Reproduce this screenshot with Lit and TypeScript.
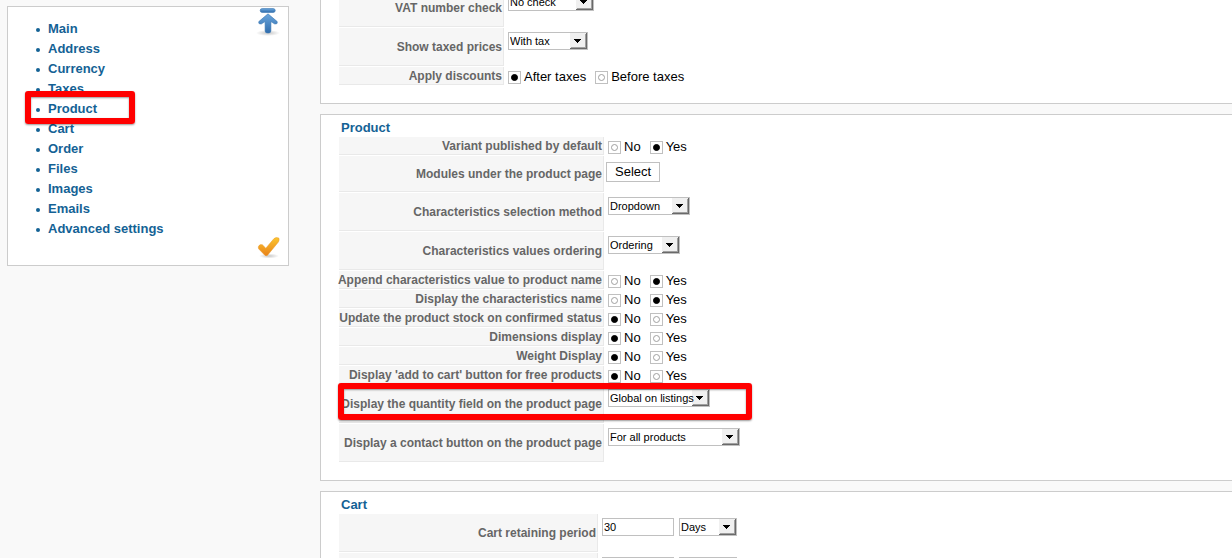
import { LitElement, html, css, nothing, TemplateResult } from "lit";
import { customElement, property } from "lit/decorators.js";
import { classMap } from "lit/directives/class-map.js";

type Field =
  | { kind: "select"; id: string; options: string[]; size: string }
  | { kind: "radio"; id: string; options: string[]; value: string }
  | { kind: "button"; id: string; text: string }
  | { kind: "period"; id: string; amount: string; unit: string };

interface Setting {
  label: string;
  field: Field;
  marked?: boolean;
}

const yesNo = (id: string, value: string): Field => ({ kind: "radio", id, options: ["No", "Yes"], value });

const TAXES: Setting[] = [
  { label: "VAT number check", field: { kind: "select", id: "vat-check", options: ["No check"], size: "w86" } },
  { label: "Show taxed prices", field: { kind: "select", id: "taxed-prices", options: ["With tax"], size: "w80" } },
  {
    label: "Apply discounts",
    field: { kind: "radio", id: "discounts", options: ["After taxes", "Before taxes"], value: "After taxes" },
  },
];

const PRODUCT: Setting[] = [
  { label: "Variant published by default", field: yesNo("variant", "Yes") },
  { label: "Modules under the product page", field: { kind: "button", id: "modules", text: "Select" } },
  { label: "Characteristics selection method", field: { kind: "select", id: "char-method", options: ["Dropdown"], size: "w82" } },
  { label: "Characteristics values ordering", field: { kind: "select", id: "char-order", options: ["Ordering"], size: "w72" } },
  { label: "Append characteristics value to product name", field: yesNo("append", "Yes") },
  { label: "Display the characteristics name", field: yesNo("char-name", "Yes") },
  { label: "Update the product stock on confirmed status", field: yesNo("stock", "No") },
  { label: "Dimensions display", field: yesNo("dimensions", "No") },
  { label: "Weight Display", field: yesNo("weight", "No") },
  { label: "Display 'add to cart' button for free products", field: yesNo("free", "No") },
  {
    label: "Display the quantity field on the product page",
    field: { kind: "select", id: "quantity", options: ["Global on listings"], size: "w102" },
    marked: true,
  },
  {
    label: "Display a contact button on the product page",
    field: { kind: "select", id: "contact", options: ["For all products"], size: "w132" },
  },
];

const CART: Setting[] = [
  { label: "Cart retaining period", field: { kind: "period", id: "retain", amount: "30", unit: "Days" } },
  { label: "", field: { kind: "period", id: "next-period", amount: "", unit: "" } },
];

@customElement("settings-panel")
export class SettingsPanel extends LitElement {
  @property() heading = "";
  @property({ attribute: false }) settings: Setting[] = [];

  static styles = css`
    :host {
      display: block;
      box-sizing: border-box;
      background: #fff;
      border: 1px solid #ccc;
      border-right: 0;
      padding: 0 18px 18px;
      --key: 265px;
    }
    :host([narrow]) { --key: 165px; }
    :host([medium]) { --key: 259px; }
    .heading {
      margin: 0;
      padding: 4px 2px 0;
      font-size: 13px;
      line-height: 18px;
      font-weight: bold;
      color: #146295;
    }
    .rows { display: grid; gap: 1px; }
    .row {
      position: relative;
      display: grid;
      grid-template-columns: var(--key) 1fr;
      min-height: 38px;
    }
    .row.radio { min-height: 18px; }
    .row.button { min-height: 36px; }
    .key {
      display: flex;
      align-items: center;
      justify-content: flex-end;
      padding-right: 1px;
      background: #f6f6f6;
      border: solid #e9e9e9;
      border-width: 0 1px 1px 0;
      color: #666;
      font-size: 12px;
      line-height: 16px;
      font-weight: bold;
      white-space: nowrap;
    }
    .value {
      display: flex;
      align-items: flex-start;
      padding: 4px 4px 0;
      gap: 5px;
    }
    .radio .value { padding-top: 2px; gap: 9px; }
    .button .value { padding: 6px 2px 0; }
    select, input, button {
      box-sizing: border-box;
      margin: 0;
      border: 1px solid #c0c0c0;
      border-radius: 0;
      background-color: #fff;
      color: #000;
      font-family: inherit;
    }
    select, .text {
      height: 18px;
      font-size: 11px;
      line-height: 16px;
      padding: 0 1px;
    }
    select {
      appearance: none;
      background-repeat: no-repeat;
      background-position: right center;
      background-image: url("data:image/svg+xml,%3Csvg xmlns='http://www.w3.org/2000/svg' width='17' height='16' shape-rendering='crispEdges'%3E%3Cpath fill='%23f0f0f0' d='M0 0h17v16H0z'/%3E%3Cpath fill='%23696969' d='M16 0h1v16H0v-1h16z'/%3E%3Cpath fill='%23a0a0a0' d='M15 1h1v14H1v-1h14z'/%3E%3Cpath d='M4 6h7v1H4zM5 7h5v1H5zM6 8h3v1H6zM7 9h1v1H7z'/%3E%3C/svg%3E");
    }
    .w58 { width: 58px; }
    .w72 { width: 72px; }
    .w80 { width: 80px; }
    .w82 { width: 82px; }
    .w86 { width: 86px; }
    .w102 { width: 102px; }
    .w132 { width: 132px; }
    button {
      height: 20px;
      padding: 0 8px;
      font-size: 13px;
      line-height: 18px;
    }
    .choice {
      display: flex;
      align-items: flex-start;
      gap: 3px;
      font-size: 13px;
      line-height: 16px;
      color: #000;
      white-space: nowrap;
    }
    .dot {
      appearance: none;
      width: 13px;
      height: 13px;
      margin-top: 2px;
      display: grid;
      place-items: center;
    }
    .dot::before {
      content: "";
      box-sizing: border-box;
      width: 7px;
      height: 7px;
      border: 1px solid #a0a0a0;
      border-radius: 50%;
    }
    .dot:checked::before { background: #000; border-color: #000; }
    .mark {
      position: absolute;
      inset: -2px auto 3px -1px;
      width: 414px;
      box-sizing: border-box;
      border: 6px solid #f00;
      border-radius: 3px;
      box-shadow: 0 1px 2px rgba(0, 0, 0, 0.4), inset 0 1px 2px rgba(0, 0, 0, 0.4);
      pointer-events: none;
    }
  `;

  private control(f: Field): TemplateResult {
    switch (f.kind) {
      case "select":
        return html`<select id=${f.id} class=${f.size}>${f.options.map((o) => html`<option>${o}</option>`)}</select>`;
      case "button":
        return html`<button id=${f.id} type="button">${f.text}</button>`;
      case "period":
        return html`<input id=${f.id} class="text w72" type="text" .value=${f.amount} />
          <select class="w58" aria-label="Unit"><option>${f.unit}</option></select>`;
      case "radio":
        return html`${f.options.map(
          (o) => html`<label class="choice"
            ><input class="dot" type="radio" name=${f.id} .checked=${o === f.value} /><span>${o}</span></label
          >`,
        )}`;
    }
  }

  private row(s: Setting) {
    const group = s.field.kind === "radio";
    const id = s.field.id;
    return html`<div
      class=${classMap({ row: true, [s.field.kind]: true })}
      role=${group ? "radiogroup" : nothing}
      aria-labelledby=${group ? `${id}-key` : nothing}
    >
      ${group
        ? html`<span class="key" id="${id}-key">${s.label}</span>`
        : html`<label class="key" for=${id}>${s.label}</label>`}
      <div class="value">${this.control(s.field)}</div>
      ${s.marked ? html`<span class="mark"></span>` : nothing}
    </div>`;
  }

  render() {
    return html`${this.heading ? html`<h2 class="heading">${this.heading}</h2>` : nothing}
      <div class="rows">${this.settings.map((s) => this.row(s))}</div>`;
  }
}

@customElement("settings-nav")
export class SettingsNav extends LitElement {
  private items = [
    "Main", "Address", "Currency", "Taxes", "Product", "Cart",
    "Order", "Files", "Images", "Emails", "Advanced settings",
  ];

  static styles = css`
    :host {
      display: block;
      position: relative;
      box-sizing: border-box;
      border: 1px solid #ccc;
      background: #fff;
      padding: 12px 8px 26px 28px;
    }
    ul { list-style: none; margin: 0; padding: 0; }
    li {
      position: relative;
      display: flex;
      align-items: center;
      gap: 8px;
      color: #146295;
      font-size: 13px;
      line-height: 20px;
      font-weight: bold;
    }
    li::before {
      content: "";
      width: 4px;
      height: 4px;
      margin-top: 2px;
      border-radius: 50%;
      background: #146295;
    }
    a { color: inherit; text-decoration: none; }
    .mark {
      position: absolute;
      top: -8px;
      left: -11px;
      width: 110px;
      height: 33px;
      z-index: 1;
      box-sizing: border-box;
      border: 6px solid #f00;
      border-radius: 3px;
      box-shadow: 0 1px 2px rgba(0, 0, 0, 0.4), inset 0 1px 2px rgba(0, 0, 0, 0.4);
      pointer-events: none;
    }
    .icon { position: absolute; right: 8px; display: block; }
    .top { top: 0; }
    .save { bottom: 5px; }
    svg { display: block; }
  `;

  render() {
    return html`
      <ul>
        ${this.items.map(
          (t) => html`<li><a href="#">${t}</a>${t === "Product" ? html`<span class="mark"></span>` : nothing}</li>`,
        )}
      </ul>
      <a class="icon top" href="#" aria-label="Back to top">
        <svg width="24" height="30" viewBox="0 0 24 30">
          <defs>
            <linearGradient id="blue" x1="0" y1="0" x2="0" y2="1">
              <stop offset="0" stop-color="#6ba6dc" />
              <stop offset="1" stop-color="#2f6cac" />
            </linearGradient>
            <radialGradient id="shade">
              <stop offset="0" stop-color="#000" stop-opacity="0.22" />
              <stop offset="1" stop-color="#000" stop-opacity="0" />
            </radialGradient>
          </defs>
          <ellipse cx="12" cy="26" rx="12" ry="3" fill="url(#shade)" />
          <rect x="4.2" y="1.5" width="15" height="4" rx="2" fill="url(#blue)" stroke="#3d78b4" stroke-width=".6" />
          <path
            d="M12 6.8 L21.2 14.6 Q22 17.4 18.8 17 L14.9 14.6 V24 Q14.9 26 12 26 Q9.1 26 9.1 24 V14.6 L5.2 17 Q2 17.4 2.8 14.6 Z"
            fill="url(#blue)" stroke="#3d78b4" stroke-width=".6" stroke-linejoin="round"
          />
        </svg>
      </a>
      <a class="icon save" href="#" aria-label="Save">
        <svg width="24" height="24" viewBox="0 0 24 24">
          <defs>
            <linearGradient id="gold" x1="0" y1="0" x2="0" y2="1">
              <stop offset="0" stop-color="#fbc62f" />
              <stop offset="1" stop-color="#e8811a" />
            </linearGradient>
            <radialGradient id="under">
              <stop offset="0" stop-color="#000" stop-opacity="0.22" />
              <stop offset="1" stop-color="#000" stop-opacity="0" />
            </radialGradient>
          </defs>
          <ellipse cx="13" cy="20" rx="10" ry="2.5" fill="url(#under)" />
          <path
            d="M2.4 10.6 Q3.4 7.8 6.4 8.8 L9.8 12.2 L18 2.6 Q20 .8 22.8 2 Q23.6 4 22.4 6 L11.6 19.2 Q10 20.6 8.6 19 L3 13.2 Q2 12 2.4 10.6 Z"
            fill="url(#gold)" stroke="#eb9a2c" stroke-width=".5"
          />
        </svg>
      </a>
    `;
  }
}

@customElement("app-root")
export class AppRoot extends LitElement {
  static styles = css`
    :host {
      display: block;
      height: 100vh;
      overflow: hidden;
      background: #f9f9f9;
      font-family: "Liberation Sans", Arial, sans-serif;
    }
    .page {
      display: grid;
      grid-template-columns: 282px 1fr;
      column-gap: 31px;
      align-items: start;
      padding-left: 7px;
    }
    .nav { margin-top: 6px; }
    /* The column is scrolled part of the way down its first panel. */
    .panels { display: grid; gap: 10px; margin-top: -12px; }
  `;

  render() {
    return html`<div class="page">
      <nav class="nav"><settings-nav></settings-nav></nav>
      <main class="panels">
        <settings-panel narrow .settings=${TAXES}></settings-panel>
        <settings-panel heading="Product" .settings=${PRODUCT}></settings-panel>
        <settings-panel medium heading="Cart" .settings=${CART}></settings-panel>
      </main>
    </div>`;
  }
}
